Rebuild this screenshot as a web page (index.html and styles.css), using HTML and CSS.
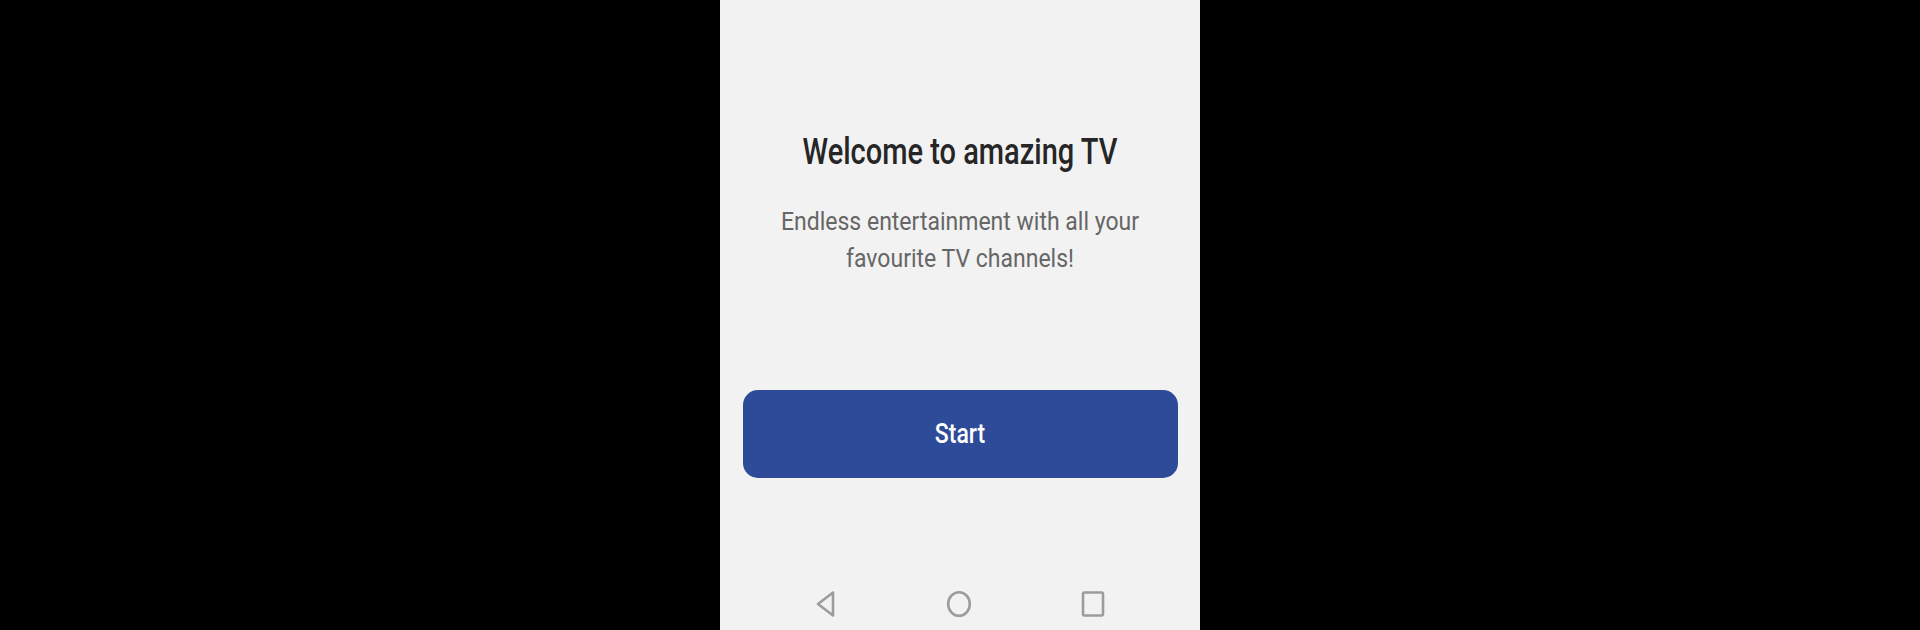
FILE: index.html
```html
<!DOCTYPE html>
<html lang="en">
<head>
    <meta charset="UTF-8">
    <title>Welcome to amazing TV</title>
    <link rel="stylesheet" href="styles.css">
</head>
<body>
    <div class="phone">
        <div class="welcome">
            <h1 class="title">Welcome to amazing TV</h1>
            <p class="subtitle">Endless entertainment with all your<br>favourite TV channels!</p>
        </div>
        <button class="start-btn"><span>Start</span></button>
        <div class="nav-bar">
            <svg class="nav-icon" width="22" height="28" viewBox="0 0 22 28">
                <path d="M18 2.5 L3 14 L18 25.5 Z" fill="none" stroke="#9c9c9c" stroke-width="2.6" stroke-linejoin="round"/>
            </svg>
            <svg class="nav-icon" width="28" height="28" viewBox="0 0 28 28">
                <ellipse cx="14" cy="14" rx="10.8" ry="11.8" fill="none" stroke="#9c9c9c" stroke-width="2.6"/>
            </svg>
            <svg class="nav-icon" width="26" height="28" viewBox="0 0 26 28">
                <rect x="3" y="2.5" width="20" height="23" rx="1.5" fill="none" stroke="#9c9c9c" stroke-width="2.6"/>
            </svg>
        </div>
    </div>
</body>
</html>
```

FILE: styles.css
```css
html, body {
    margin: 0;
    padding: 0;
    height: 100%;
    background: #000;
}
body {
    display: flex;
    justify-content: center;
    font-family: Roboto, "Noto Sans", sans-serif;
    overflow: hidden;
}
.phone {
    width: 480px;
    height: 630px;
    background: #f2f2f2;
    display: flex;
    flex-direction: column;
    align-items: center;
}
.welcome {
    text-align: center;
    padding-top: 130px;
}
.title {
    margin: 0;
    font-size: 29px;
    font-weight: 500;
    color: #262626;
    line-height: 42px;
    transform: scaleY(1.25);
}
.subtitle {
    margin: 36px 0 0;
    font-size: 23px;
    font-weight: 400;
    color: #666;
    line-height: 32px;
    transform: scaleY(1.16);
}
.start-btn {
    margin-top: 118px;
    width: 435px;
    height: 88px;
    border: none;
    border-radius: 15px;
    background: #2d4b98;
    color: #fff;
    font-family: Roboto, sans-serif;
    font-size: 23px;
    font-weight: 500;
    cursor: pointer;
}
.start-btn span {
    display: inline-block;
    transform: scaleY(1.2);
}
.nav-bar {
    margin-top: auto;
    margin-bottom: 12px;
    width: 100%;
    display: flex;
    justify-content: space-between;
    padding: 0 94px 0 95px;
    box-sizing: border-box;
}
```
